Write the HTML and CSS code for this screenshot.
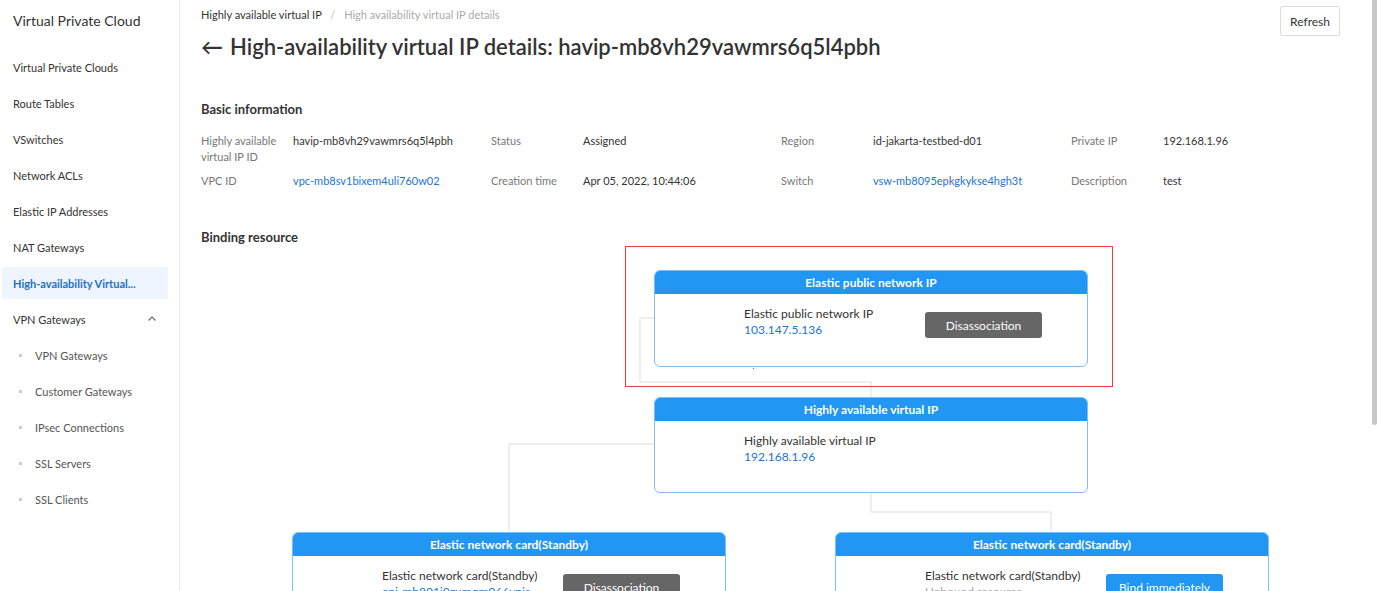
FILE: index.html
```html
<!DOCTYPE html>
<html lang="en">
<head>
  <meta charset="UTF-8">
  <meta name="viewport" content="width=device-width, initial-scale=1.0">
  <title>High-availability virtual IP details</title>
  <link rel="stylesheet" href="styles.css">
</head>
<body>
  <div class="layout">
    <aside class="sidebar">
      <div class="sidebar-title">Virtual Private Cloud</div>
      <ul class="menu">
        <li class="menu-item">Virtual Private Clouds</li>
        <li class="menu-item">Route Tables</li>
        <li class="menu-item">VSwitches</li>
        <li class="menu-item">Network ACLs</li>
        <li class="menu-item">Elastic IP Addresses</li>
        <li class="menu-item">NAT Gateways</li>
        <li class="menu-item active">High-availability Virtual...</li>
        <li class="menu-item group">
          <span>VPN Gateways</span>
          <svg class="chevron" width="12" height="12" viewBox="0 0 12 12"><path d="M2.5 7.5 L6 4 L9.5 7.5" fill="none" stroke="#666" stroke-width="1.1"/></svg>
        </li>
        <li class="menu-item sub"><span class="dot"></span>VPN Gateways</li>
        <li class="menu-item sub"><span class="dot"></span>Customer Gateways</li>
        <li class="menu-item sub"><span class="dot"></span>IPsec Connections</li>
        <li class="menu-item sub"><span class="dot"></span>SSL Servers</li>
        <li class="menu-item sub"><span class="dot"></span>SSL Clients</li>
      </ul>
    </aside>

    <main class="main">
      <div class="page-head">
        <div>
          <div class="breadcrumb">
            <span>Highly available virtual IP</span>
            <span class="sep">/</span>
            <span class="current">High availability virtual IP details</span>
          </div>
          <h1 class="page-title"><span class="back">&larr;</span>High-availability virtual IP details: havip-mb8vh29vawmrs6q5l4pbh</h1>
        </div>
        <button class="btn-refresh">Refresh</button>
      </div>

      <h2 class="section-title">Basic information</h2>
      <div class="info-grid">
        <div class="label">Highly available virtual IP ID</div>
        <div class="value">havip-mb8vh29vawmrs6q5l4pbh</div>
        <div class="label">Status</div>
        <div class="value">Assigned</div>
        <div class="label">Region</div>
        <div class="value">id-jakarta-testbed-d01</div>
        <div class="label">Private IP</div>
        <div class="value">192.168.1.96</div>

        <div class="label">VPC ID</div>
        <div class="value link">vpc-mb8sv1bixem4uli760w02</div>
        <div class="label">Creation time</div>
        <div class="value">Apr 05, 2022, 10:44:06</div>
        <div class="label">Switch</div>
        <div class="value link">vsw-mb8095epkgkykse4hgh3t</div>
        <div class="label">Description</div>
        <div class="value">test</div>
      </div>

      <h2 class="section-title binding">Binding resource</h2>
      <div class="diagram">
        <svg class="wires" width="1100" height="400">
          <polyline points="453,72 439,72 439,136 670,136 670,151" fill="none" stroke="#ddd" stroke-width="1"/>
          <polyline points="453,198 308,198 308,286" fill="none" stroke="#ddd" stroke-width="1"/>
          <polyline points="670,246 670,266 850,266 850,286" fill="none" stroke="#ddd" stroke-width="1"/>
          <rect x="552" y="122" width="1" height="1" fill="#f33"/>
        </svg>
        <div class="highlight"></div>

        <div class="node node-eip">
          <div class="node-head">Elastic public network IP</div>
          <div class="node-body">
            <div class="node-info">
              <div>Elastic public network IP</div>
              <div class="link">103.147.5.136</div>
            </div>
            <button class="node-btn">Disassociation</button>
          </div>
        </div>

        <div class="node node-havip">
          <div class="node-head">Highly available virtual IP</div>
          <div class="node-body">
            <div class="node-info">
              <div>Highly available virtual IP</div>
              <div class="link">192.168.1.96</div>
            </div>
          </div>
        </div>

        <div class="node node-eni-left">
          <div class="node-head">Elastic network card(Standby)</div>
          <div class="node-body">
            <div class="node-info">
              <div>Elastic network card(Standby)</div>
              <div class="link">eni-mb801j9zumqm066vnis</div>
            </div>
            <button class="node-btn">Disassociation</button>
          </div>
        </div>

        <div class="node node-eni-right">
          <div class="node-head">Elastic network card(Standby)</div>
          <div class="node-body">
            <div class="node-info">
              <div>Elastic network card(Standby)</div>
              <div class="muted">Unbound resource</div>
            </div>
            <button class="node-btn primary">Bind immediately</button>
          </div>
        </div>
      </div>
    </main>
  </div>
  <div class="scroll-thumb"></div>
</body>
</html>
```

FILE: styles.css
```css
body {
  margin: 0;
  font-family: Lato, "Open Sans", sans-serif;
  color: #333;
  background: #fff;
  height: 591px;
  overflow: hidden;
}

.layout {
  display: flex;
  height: 591px;
}

/* sidebar */
.sidebar {
  width: 179px;
  flex-shrink: 0;
  border-right: 1px solid #eee;
}

.sidebar-title {
  font-size: 14px;
  line-height: 20px;
  margin: 11px 0 20px 13px;
  color: #333;
}

.menu {
  list-style: none;
  margin: 0;
  padding: 0;
}

.menu-item {
  display: flex;
  align-items: center;
  height: 32px;
  margin: 0 11px 4px 2px;
  padding-left: 11px;
  font-size: 11px;
  border-radius: 2px;
  color: #333;
}

.menu-item.active {
  background: #eef5fe;
  color: #1b6fd0;
  font-weight: bold;
}

.menu-item.group {
  justify-content: space-between;
  padding-right: 10px;
}

.menu-item.sub {
  padding-left: 17px;
  color: #555;
}

.dot {
  width: 3px;
  height: 3px;
  background: #ccc;
  margin-right: 13px;
}

/* main */
.main {
  flex: 1;
  min-width: 0;
  padding: 0 39px 0 21px;
  position: relative;
}

.page-head {
  display: flex;
  justify-content: space-between;
  align-items: flex-start;
}

.breadcrumb {
  margin-top: 7px;
  font-size: 11px;
  line-height: 16px;
  color: #333;
}

.breadcrumb .sep {
  color: #bbb;
  margin: 0 6px;
}

.breadcrumb .current {
  color: #aaa;
}

.page-title {
  margin: 9px 0 0 0;
  font-size: 22px;
  line-height: 30px;
  font-weight: 600;
  color: #333;
}

.back {
  margin-right: 7px;
}

.btn-refresh {
  margin-top: 6px;
  height: 30px;
  padding: 0 9px;
  background: #fff;
  border: 1px solid #ddd;
  border-radius: 2px;
  font-family: inherit;
  font-size: 12px;
  color: #333;
}

.section-title {
  margin: 38px 0 0 0;
  font-size: 13px;
  line-height: 18px;
  font-weight: bold;
}

.section-title.binding {
  margin-top: 39px;
}

.info-grid {
  display: grid;
  grid-template-columns: repeat(4, 92px 198px);
  row-gap: 8px;
  margin-top: 15px;
  font-size: 11px;
  line-height: 16px;
}

.label {
  color: #777;
  padding-right: 6px;
}

.value {
  color: #333;
}

.link {
  color: #1b74d3;
}

.muted {
  color: #aaa;
}

/* diagram */
.diagram {
  position: relative;
  height: 400px;
}

.wires {
  position: absolute;
  left: 0;
  top: 0;
}

.highlight {
  position: absolute;
  left: 424px;
  top: 0;
  width: 486px;
  height: 139px;
  border: 1.5px solid #f23b3b;
}

.node {
  position: absolute;
  width: 434px;
  border: 1px solid #7ebdf6;
  border-radius: 6px;
  overflow: hidden;
  background: #fff;
  box-sizing: border-box;
}

.node-eip { left: 453px; top: 24px; height: 97px; }
.node-havip { left: 453px; top: 151px; height: 96px; }
.node-eni-left { left: 91px; top: 286px; height: 100px; }
.node-eni-right { left: 634px; top: 286px; height: 100px; }

.node-head {
  background: #2196f3;
  color: #fff;
  font-size: 12px;
  font-weight: bold;
  text-align: center;
  height: 24px;
  line-height: 25px;
  margin: -1px -1px 0 -1px;
}

.node-body {
  display: flex;
  align-items: flex-start;
  padding: 12px 0 0 89px;
  font-size: 12px;
  line-height: 16px;
}

.node-info {
  width: 181px;
}

.node-btn {
  margin-top: 6px;
  width: 117px;
  height: 26px;
  border: none;
  border-radius: 3px;
  background: #666;
  color: #fff;
  font-family: inherit;
  font-size: 12px;
}

.node-btn.primary {
  background: #2196f3;
}

.scroll-thumb {
  position: absolute;
  left: 1372px;
  top: 0;
  width: 5px;
  height: 425px;
  background: #c8c8c8;
  border-radius: 0 0 3px 3px;
}
```
